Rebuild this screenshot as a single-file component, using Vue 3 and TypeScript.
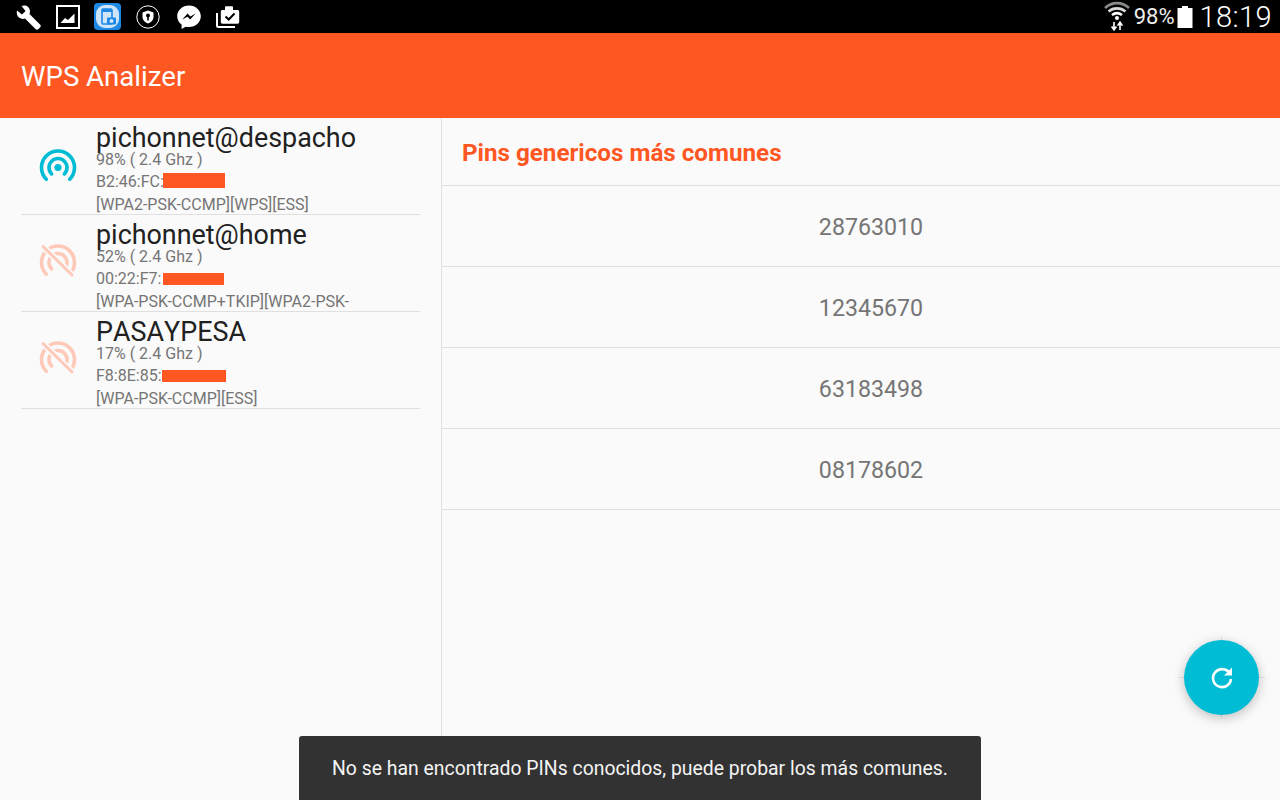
<script setup lang="ts">
interface Network {
  ssid: string
  info: string
  mac: string
  mask: { left: number; width: number; height: number }
  caps: string
  wps: boolean
}

const networks: Network[] = [
  { ssid: 'pichonnet@despacho', info: '98% ( 2.4 Ghz )', mac: 'B2:46:FC:', mask: { left: -1, width: 62, height: 15 }, caps: '[WPA2-PSK-CCMP][WPS][ESS]', wps: true },
  { ssid: 'pichonnet@home', info: '52% ( 2.4 Ghz )', mac: '00:22:F7:', mask: { left: 2, width: 61, height: 12 }, caps: '[WPA-PSK-CCMP+TKIP][WPA2-PSK-', wps: false },
  { ssid: 'PASAYPESA', info: '17% ( 2.4 Ghz )', mac: 'F8:8E:85:', mask: { left: 0, width: 64, height: 12 }, caps: '[WPA-PSK-CCMP][ESS]', wps: false },
]

const pins = ['28763010', '12345670', '63183498', '08178602']
</script>

<template>
  <div class="screen">
    <div class="status-bar">
      <div class="status-icons">
        <svg class="wrench" width="28" height="28" viewBox="0 0 28 28">
          <path d="M3 7.5 L8 11.5 L11.5 8 L7.5 3 C11 1.5 15.5 3 16 8 C16 9.5 15.8 10.2 15.5 11 L26 21.5 C27 22.5 27 23.5 26 24.5 L24.5 26 C23.5 27 22.5 27 21.5 26 L11 15.5 C9 16.2 7 16 5 14.5 C3 13 2.3 10 3 7.5 Z" fill="#fff" />
        </svg>
        <svg class="gallery" width="24" height="24" viewBox="0 0 24 24">
          <rect x="1" y="1" width="22" height="22" fill="none" stroke="#fff" stroke-width="2" />
          <path d="M4.5 18 L9 13 L12 15 L18.5 8.5 V18 Z" fill="#fff" />
        </svg>
        <svg class="app" width="27" height="27" viewBox="0 0 27 27">
          <rect width="27" height="27" rx="4" fill="#1e88e5" />
          <rect x="2" y="2" width="23" height="23" rx="9" fill="#cfe5fa" />
          <rect x="8" y="6" width="10" height="15" rx="1" fill="none" stroke="#1e88e5" stroke-width="1.6" />
          <rect x="8" y="6" width="10" height="3" fill="#1e88e5" />
          <rect x="13" y="14.5" width="9" height="7" rx="1" fill="#1e88e5" />
          <circle cx="17.5" cy="18" r="2" fill="#cfe5fa" />
        </svg>
        <svg class="shield" width="24" height="24" viewBox="0 0 24 24">
          <circle cx="12" cy="12" r="11.2" fill="none" stroke="#fff" stroke-width="1" />
          <path d="M12 5.5 L17.5 7.5 V12 C17.5 15 15 17.5 12 18.5 C9 17.5 6.5 15 6.5 12 V7.5 Z" fill="#fff" />
          <circle cx="12" cy="10.5" r="2" fill="#000" />
          <rect x="11.2" y="11" width="1.6" height="4.5" fill="#000" />
        </svg>
        <svg class="messenger" width="26" height="26" viewBox="0 0 26 26">
          <path d="M13 1.5 C6.4 1.5 1.2 6.3 1.2 12.3 C1.2 15.7 2.9 18.6 5.6 20.6 V25 L9.7 22.7 C10.8 23 11.9 23.1 13 23.1 C19.6 23.1 24.8 18.3 24.8 12.3 C24.8 6.3 19.6 1.5 13 1.5 Z" fill="#fff" />
          <path d="M6.2 15.6 L11.6 9.6 L14.4 12.5 L19.6 9.6 L14.2 15.6 L11.4 12.7 Z" fill="#000" />
        </svg>
        <svg class="bag" width="24" height="24" viewBox="0 0 24 24">
          <path d="M1 8 V20.5 C1 21.5 1.5 22 2.5 22 H19" fill="none" stroke="#fff" stroke-width="2" />
          <path d="M9 5 V2.5 C9 1.8 9.5 1.3 10.2 1.3 H15.8 C16.5 1.3 17 1.8 17 2.5 V5 H21.5 C22.5 5 23.2 5.7 23.2 6.7 V17 C23.2 18 22.5 18.7 21.5 18.7 H6.5 C5.5 18.7 4.8 18 4.8 17 V6.7 C4.8 5.7 5.5 5 6.5 5 Z" fill="#fff" />
          <path d="M9.5 11.5 L12.7 14.5 L18.5 8.5" fill="none" stroke="#000" stroke-width="2" />
        </svg>
      </div>
      <div class="status-right">
        <svg class="wifi" width="26" height="31" viewBox="0 0 26 31">
          <path d="M1 7 C8 0.5 18 0.5 25 7" fill="none" stroke="#8a8a8a" stroke-width="2.6" />
          <path d="M4.5 10.5 C9.5 6.3 16.5 6.3 21.5 10.5" fill="none" stroke="#d8d8d8" stroke-width="2.6" />
          <path d="M8 14 C11 11.8 15 11.8 18 14" fill="none" stroke="#fff" stroke-width="2.6" />
          <circle cx="13" cy="17" r="2" fill="#fff" />
          <path d="M10 21 V28 M7.6 25.6 L10 28.8 L12.4 25.6 M16 29 V22 M13.6 24.6 L16 21.2 L18.4 24.6" fill="none" stroke="#fff" stroke-width="1.6" />
        </svg>
        <span class="battery-pct">98%</span>
        <svg class="battery" width="16" height="22" viewBox="0 0 16 22">
          <path d="M5 0 H11 V2 H15.5 V22 H0.5 V2 H5 Z" fill="#fff" />
        </svg>
        <span class="clock">18:19</span>
      </div>
    </div>

    <header class="app-bar">WPS Analizer</header>

    <main class="content">
      <section class="networks">
        <div v-for="n in networks" :key="n.ssid" class="network">
          <svg class="net-icon" :class="{ locked: !n.wps }" width="40" height="40" viewBox="0 0 40 40">
            <g fill="none" stroke-linecap="round" stroke-width="3.6">
              <path d="M8.3 30.2 A16.5 16.5 0 1 1 31.7 30.2" />
              <path d="M13.6 24.9 A9 9 0 1 1 26.4 24.9" />
              <template v-if="!n.wps">
                <path class="gap" d="M5 2.5 L34 31" stroke-width="6.5" />
                <path d="M5 2.5 L34 31" stroke-width="3" />
              </template>
            </g>
            <circle v-if="n.wps" cx="20" cy="18.5" r="3.6" />
          </svg>
          <div class="net-text">
            <div class="ssid">{{ n.ssid }}</div>
            <div class="detail">{{ n.info }}</div>
            <div class="detail">{{ n.mac }}<span class="mask" :style="{ marginLeft: n.mask.left + 'px', width: n.mask.width + 'px', height: n.mask.height + 'px' }" /></div>
            <div class="detail caps">{{ n.caps }}</div>
          </div>
        </div>
      </section>

      <section class="pins">
        <h2 class="pins-title">Pins genericos más comunes</h2>
        <div v-for="p in pins" :key="p" class="pin">{{ p }}</div>
      </section>
    </main>

    <div class="fab-wrap">
      <button class="fab" type="button">
        <svg width="26" height="26" viewBox="0 0 26 26">
          <path d="M20.6 8.2 A9 9 0 1 0 22 14" fill="none" stroke="#fff" stroke-width="2.6" />
          <path d="M15 10.4 H23 V2.4 Z" fill="#fff" />
        </svg>
      </button>
    </div>

    <div class="snackbar">No se han encontrado PINs conocidos, puede probar los más comunes.</div>
  </div>
</template>

<style scoped>
.screen {
  position: relative;
  width: 1280px;
  height: 800px;
  overflow: hidden;
  display: flex;
  flex-direction: column;
  background: #fafafa;
  font-family: Roboto, "Liberation Sans", sans-serif;
}

.status-bar {
  height: 33px;
  flex: none;
  background: #000;
  display: flex;
  justify-content: space-between;
  align-items: center;
  padding: 0 8px 0 14px;
}

.status-icons {
  display: flex;
  align-items: center;
  gap: 14px;
}

.shield {
  margin-left: 1px;
}

.messenger {
  margin-left: 2px;
}

.status-right {
  display: flex;
  align-items: center;
  color: #fff;
}

.battery-pct {
  font-size: 22px;
  margin-left: 4px;
  color: #eee;
}

.battery {
  margin-left: 2px;
}

.clock {
  font-size: 29px;
  font-weight: 300;
  margin-left: 7px;
  letter-spacing: 0.4px;
}

.app-bar {
  height: 85px;
  flex: none;
  background: #ff5722;
  color: #fff;
  font-size: 27.6px;
  line-height: 88px;
  padding-left: 21px;
}

.content {
  flex: 1;
  display: flex;
  min-height: 0;
}

.networks {
  width: 399px;
  flex: none;
  padding: 0 21px;
  border-right: 1px solid #e0e0e0;
}

.network {
  height: 97px;
  box-sizing: border-box;
  border-bottom: 1px solid #e0e0e0;
  display: flex;
  align-items: center;
  overflow: hidden;
}

.net-icon {
  flex: none;
  margin: 6px 0 0 17px;
  fill: #00bcd4;
  stroke: none;
}

.net-icon.locked {
  margin-top: 2px;
}

.net-icon path {
  stroke: #00bcd4;
}

.net-icon.locked path {
  stroke: #ffc9b9;
}

.net-icon.locked path.gap {
  stroke: #fafafa;
}

.net-text {
  align-self: flex-start;
  margin-left: 18px;
  padding-top: 9px;
  min-width: 0;
  white-space: nowrap;
}

.ssid {
  font-size: 26.9px;
  line-height: 22px;
  font-kerning: none;
  color: #212121;
}

.detail {
  font-size: 16px;
  line-height: 22px;
  height: 22px;
  color: #757575;
}

.caps {
  margin-top: 1px;
  height: 20px;
}

.mask {
  display: inline-block;
  background: #ff5722;
  vertical-align: -1px;
}

.pins {
  flex: 1;
  min-width: 0;
}

.pins-title {
  margin: 0;
  height: 68px;
  box-sizing: border-box;
  border-bottom: 1px solid #e0e0e0;
  padding-left: 20px;
  font-size: 24.2px;
  line-height: 71px;
  font-weight: 700;
  color: #ff5722;
}

.pin {
  height: 81px;
  box-sizing: border-box;
  border-bottom: 1px solid #e0e0e0;
  padding-left: 20px;
  text-align: center;
  font-size: 23.2px;
  line-height: 82px;
  color: #757575;
}

.fab-wrap {
  position: absolute;
  left: 1184px;
  top: 640px;
  width: 75px;
  height: 75px;
}

.fab-wrap::before {
  content: "";
  position: absolute;
  left: -6px;
  right: -6px;
  top: 37px;
  height: 1px;
  background: rgba(0, 0, 0, 0.08);
}

.fab-wrap::after {
  content: "";
  position: absolute;
  top: -4px;
  bottom: -4px;
  left: 37px;
  width: 1px;
  background: rgba(0, 0, 0, 0.08);
}

.fab {
  position: relative;
  z-index: 1;
  width: 75px;
  height: 75px;
  padding: 0;
  border: none;
  border-radius: 50%;
  background: #00bcd4;
  box-shadow: 0 3px 12px rgba(0, 0, 0, 0.24);
  display: flex;
  align-items: center;
  justify-content: center;
}

.snackbar {
  position: absolute;
  left: 299px;
  bottom: 0;
  width: 682px;
  height: 64px;
  box-sizing: border-box;
  border-radius: 3px 3px 0 0;
  background: #323232;
  color: #f4f4f4;
  font-size: 19.4px;
  line-height: 65px;
  text-align: center;
}
</style>
